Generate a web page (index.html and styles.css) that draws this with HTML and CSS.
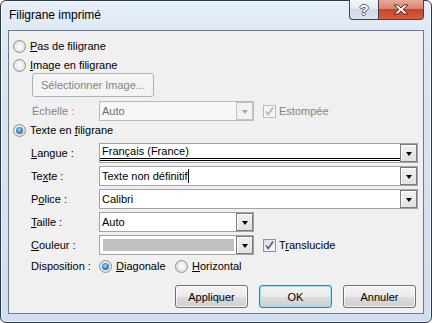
FILE: index.html
```html
<!DOCTYPE html>
<html lang="fr">
<head>
  <meta charset="UTF-8">
  <title>Filigrane imprimé</title>
  <link rel="stylesheet" href="styles.css">
</head>
<body>

<div class="window">
  <!-- Title bar -->
  <div class="titlebar">
    <div class="title">Filigrane imprimé</div>
    <div class="caption">
      <div class="cap-btn cap-help">?</div>
      <div class="cap-btn cap-close">
        <svg width="16" height="11" viewBox="0 0 16 11">
          <path d="M1 1h4l3 3 3-3h4l-5 4.5 5 4.5h-4l-3-3-3 3H1l5-4.5z" fill="#fff" stroke="#5b2a22" stroke-width="1" stroke-linejoin="round"/>
        </svg>
      </div>
    </div>
  </div>

  <div class="client">
    <div class="opt opt-first"><span class="radio"></span><span><u>P</u>as de filigrane</span></div>
    <div class="opt opt-image"><span class="radio"></span><span><u>I</u>mage en filigrane</span></div>

    <div class="btn btn-disabled btn-select">Sélectionner Image...</div>

    <div class="field-row scale-row">
      <span class="lbl disabled">Échelle :</span>
      <div class="combo combo-short combo-disabled">
        <span class="combo-text">Auto</span>
        <span class="drop"><i class="arrow"></i></span>
      </div>
      <span class="check check-disabled">
        <svg width="11" height="11" viewBox="0 0 11 11"><path d="M2 5.5L4.3 8.5L9 1.5" fill="none" stroke="#b0b0b0" stroke-width="1.6"/></svg>
      </span>
      <span class="disabled">Estompée</span>
    </div>

    <div class="opt opt-text"><span class="radio on"></span><span>Texte en <u>f</u>iligrane</span></div>

    <!-- Text watermark fields -->
    <div class="field-row field-first">
      <span class="lbl"><u>L</u>angue :</span>
      <div class="combo combo-long">
        <span class="combo-text underline">Français (France)</span>
        <span class="drop"><i class="arrow"></i></span>
      </div>
    </div>
    <div class="field-row">
      <span class="lbl">Te<u>x</u>te :</span>
      <div class="combo combo-long">
        <span class="combo-text">Texte non définitif<span class="caret"></span></span>
        <span class="drop"><i class="arrow"></i></span>
      </div>
    </div>
    <div class="field-row">
      <span class="lbl">P<u>o</u>lice :</span>
      <div class="combo combo-long">
        <span class="combo-text">Calibri</span>
        <span class="drop"><i class="arrow"></i></span>
      </div>
    </div>
    <div class="field-row">
      <span class="lbl"><u>T</u>aille :</span>
      <div class="combo combo-short">
        <span class="combo-text">Auto</span>
        <span class="drop"><i class="arrow"></i></span>
      </div>
    </div>
    <div class="field-row">
      <span class="lbl"><u>C</u>ouleur :</span>
      <div class="combo combo-short">
        <span class="swatch"></span>
        <span class="drop"><i class="arrow"></i></span>
      </div>
      <span class="check">
        <svg width="11" height="11" viewBox="0 0 11 11"><path d="M2 5.5L4.3 8.5L9 1.5" fill="none" stroke="#4a5c8e" stroke-width="1.6"/></svg>
      </span>
      <span>T<u>r</u>anslucide</span>
    </div>

    <div class="field-row dispo">
      <span class="lbl">Disposition :</span>
      <span class="dispo-opt dispo-diag"><span class="radio on"></span><span><u>D</u>iagonale</span></span>
      <span class="dispo-opt"><span class="radio"></span><span><u>H</u>orizontal</span></span>
    </div>

    <div class="actions">
      <div class="btn">Appliquer</div>
      <div class="btn btn-default">OK</div>
      <div class="btn">Annuler</div>
    </div>
  </div>
</div>

</body>
</html>
```

FILE: styles.css
```css
body {
  margin: 0;
  background-color: #fff;
  font-family: "Liberation Sans", Arial, sans-serif;
  font-size: 11px;
  color: #000;
}

.window {
  width: 432px;
  height: 323px;
  box-sizing: border-box;
  border: 1px solid #2f3a48;
  border-radius: 6px;
  padding: 0 7px 8px 7px;
  background: linear-gradient(#e6eef8, #d9e6f4 60px, #cfdff1);
  box-shadow: inset 0 0 0 1px rgba(255, 255, 255, 0.6);
  display: flex;
  flex-direction: column;
}

/* Title bar */
.titlebar {
  height: 30px;
  margin-top: -1px;
  flex-shrink: 0;
  display: flex;
  justify-content: space-between;
  align-items: flex-start;
}

.title {
  padding: 8px 0 0 1px;
  font-size: 12px;
  line-height: 14px;
}

.caption {
  display: flex;
  height: 20px;
}

.cap-btn {
  box-sizing: border-box;
  height: 20px;
  border: 1px solid #3b4452;
  border-top: none;
  display: flex;
  align-items: center;
  justify-content: center;
}

.cap-help {
  width: 29px;
  border-right: none;
  border-radius: 0 0 0 4px;
  background: linear-gradient(#f4f7fb, #e3e9f1 45%, #cfd8e3 50%, #dae3ed);
  color: #fff;
  font-size: 15px;
  font-weight: bold;
  text-shadow: 1px 0 #596371, -1px 0 #596371, 0 1px #596371, 0 -1px #596371;
}

.cap-close {
  width: 46px;
  border-radius: 0 0 4px 0;
  background: linear-gradient(#eaa999, #da836f 45%, #c7452d 50%, #d65f3d);
}

/* Client area */
.client {
  flex: 1;
  border: 1px solid #6f7a89;
  background-color: #f0f0f0;
  padding: 0 5px 0 4px;
  display: flex;
  flex-direction: column;
}

.opt {
  display: flex;
  align-items: center;
  gap: 4px;
  height: 14px;
  line-height: 14px;
}

.opt-first { margin-top: 8px; }
.opt-image { margin-top: 5px; }
.opt-text { margin-top: 2px; }

.disabled {
  color: #838383;
}

/* Radio buttons */
.radio {
  width: 13px;
  height: 13px;
  box-sizing: border-box;
  border: 1px solid #8e8f8f;
  border-radius: 50%;
  background: radial-gradient(circle, #fdfdfd 0, #f1f1f1 35%, #d4d4d4 100%);
  display: flex;
  align-items: center;
  justify-content: center;
  flex-shrink: 0;
}

.radio.on::after {
  content: "";
  width: 7px;
  height: 7px;
  border-radius: 50%;
  background: radial-gradient(circle at 45% 40%, #a8dcfc 0, #3f91d3 45%, #16497d 100%);
}

/* Check boxes */
.check {
  width: 13px;
  height: 13px;
  box-sizing: border-box;
  border: 1px solid #8e8f8f;
  background: linear-gradient(135deg, #dcdcdc, #fbfbfb);
  margin: 0 3px 0 9px;
  display: flex;
  align-items: center;
  justify-content: center;
}

.check-disabled {
  border-color: #bcbcbc;
  background: #f4f4f4;
}

/* Push buttons */
.btn {
  box-sizing: border-box;
  width: 73px;
  height: 23px;
  border: 1px solid #707070;
  border-radius: 3px;
  background: linear-gradient(#f2f2f2 0, #ebebeb 50%, #dddddd 50%, #cfcfcf 100%);
  box-shadow: inset 0 0 0 1px rgba(255, 255, 255, 0.7);
  display: flex;
  align-items: center;
  justify-content: center;
}

.btn-default {
  border-color: #3c7fb1;
  box-shadow: inset 0 0 0 1px #9ddcf7;
}

.btn-disabled {
  border-color: #adb2b5;
  background: #f4f4f4;
  color: #838383;
  box-shadow: none;
}

.btn-select {
  width: 122px;
  height: 24px;
  margin: 1px 0 0 19px;
}

/* Label + combo rows */
.field-row {
  display: flex;
  align-items: center;
  height: 20px;
  margin: 3px 0 0 18px;
}

.field-first { margin-top: 6px; }

.scale-row {
  margin: 4px 0 0 19px;
}

.lbl {
  width: 68px;
  flex-shrink: 0;
}

.scale-row .lbl { width: 67px; }

.combo {
  box-sizing: border-box;
  height: 20px;
  border: 1px solid #a3a3a3;
  background-color: #fff;
  display: flex;
}

.combo-long { width: 319px; }
.combo-short { width: 155px; }

.combo-text {
  flex: 1;
  padding-left: 2px;
  line-height: 18px;
  white-space: nowrap;
  overflow: hidden;
}

.combo-text.underline {
  border-bottom: 3px double #000;
  line-height: 14px;
  margin-bottom: 1px;
}

.caret {
  display: inline-block;
  width: 1px;
  height: 14px;
  background-color: #000;
  vertical-align: -3px;
}

.swatch {
  flex: 1;
  margin: 3px 2px 3px 3px;
  background-color: #c0c0c0;
}

.drop {
  width: 17px;
  box-sizing: border-box;
  border: 1px solid #7a7a7a;
  background: linear-gradient(#f0f0f0, #e1e1e1);
  box-shadow: inset 1px 1px #fff;
  display: flex;
  align-items: center;
  justify-content: center;
}

.arrow {
  width: 0;
  height: 0;
  border-left: 3px solid transparent;
  border-right: 3px solid transparent;
  border-top: 4px solid #000;
  margin-top: 1px;
}

.combo-disabled {
  border-color: #b9b9b9;
  background-color: #f7f7f7;
  color: #6d6d6d;
}

.combo-disabled .drop {
  border-color: #c3c3c3;
  background: #f2f2f2;
  box-shadow: none;
}

.combo-disabled .arrow {
  border-top-color: #a6a6a6;
}

/* Disposition radios */
.dispo {
  height: 14px;
  margin-top: 4px;
}

.dispo-opt {
  display: flex;
  align-items: center;
  gap: 4px;
}

.dispo-diag { width: 76px; }

/* Dialog buttons */
.actions {
  display: flex;
  justify-content: flex-end;
  gap: 11px;
  margin-top: 12px;
  padding-right: 2px;
}
```
